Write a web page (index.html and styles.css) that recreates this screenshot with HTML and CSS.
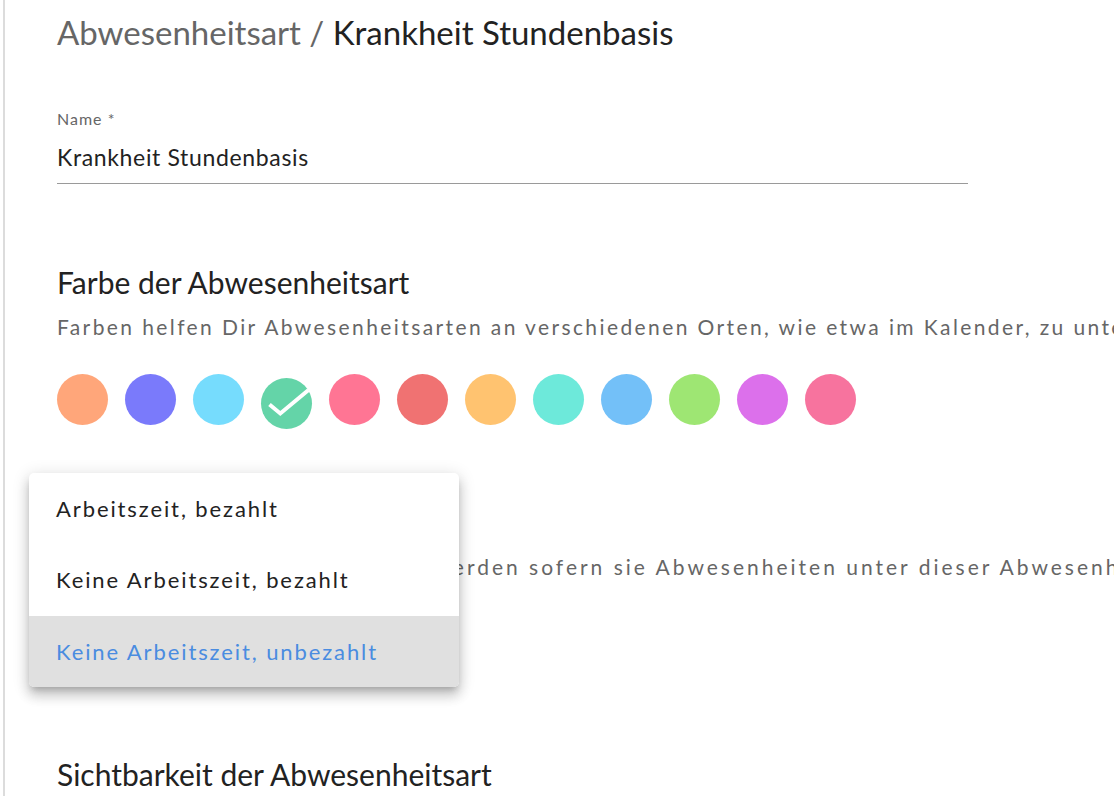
FILE: index.html
```html
<!DOCTYPE html>
<html lang="de">
<head>
<meta charset="utf-8">
<title>Abwesenheitsart</title>
<link rel="stylesheet" href="styles.css">
</head>
<body>
<div class="page">
  <h1 class="title"><span class="crumb">Abwesenheitsart /</span> Krankheit Stundenbasis</h1>

  <div class="field">
    <label class="field-label">Name *</label>
    <div class="field-input">Krankheit Stundenbasis</div>
  </div>

  <section class="section color-section">
    <h2 class="section-title">Farbe der Abwesenheitsart</h2>
    <p class="section-desc">Farben helfen Dir Abwesenheitsarten an verschiedenen Orten, wie etwa im Kalender, zu unterscheiden.</p>
    <div class="swatches">
      <span class="swatch" style="background:#ffa67a"></span>
      <span class="swatch" style="background:#7a7afb"></span>
      <span class="swatch" style="background:#76dcfd"></span>
      <span class="swatch selected" style="background:#64d4a8">
        <svg viewBox="0 0 51 51" width="51" height="51"><path d="M8.5 26.5 L19.3 35.5 L47.5 12" fill="none" stroke="#fff" stroke-width="4"/></svg>
      </span>
      <span class="swatch" style="background:#ff7594"></span>
      <span class="swatch" style="background:#f07272"></span>
      <span class="swatch" style="background:#ffc370"></span>
      <span class="swatch" style="background:#6de9da"></span>
      <span class="swatch" style="background:#73c0f8"></span>
      <span class="swatch" style="background:#9ee673"></span>
      <span class="swatch" style="background:#dc70eb"></span>
      <span class="swatch" style="background:#f7739e"></span>
    </div>
  </section>

  <section class="section work-section">
    <h2 class="section-title">Arbeitszeit</h2>
    <p class="section-desc work-desc">Lege fest, wie Stunden gezählt werden sofern sie Abwesenheiten unter dieser Abwesenheitsart eintragen.</p>
    <div class="select-space"></div>

    <ul class="menu">
      <li class="menu-item">Arbeitszeit, bezahlt</li>
      <li class="menu-item">Keine Arbeitszeit, bezahlt</li>
      <li class="menu-item active">Keine Arbeitszeit, unbezahlt</li>
    </ul>
  </section>

  <section class="section visibility-section">
    <h2 class="section-title">Sichtbarkeit der Abwesenheitsart</h2>
  </section>
</div>
</body>
</html>
```

FILE: styles.css
```css
html, body {
  margin: 0;
  padding: 0;
  background: #fff;
  overflow: hidden;
}
body {
  font-family: "Lato", "Noto Sans", sans-serif;
  color: #222;
  width: 1114px;
  height: 796px;
}
.page {
  margin-left: 3px;
  border-left: 2px solid #dcdcdc;
  padding-left: 52px;
  height: 796px;
  box-sizing: border-box;
  position: relative;
  overflow: hidden;
}
.title {
  margin: 0;
  padding-top: 12px;
  font-size: 33px;
  font-weight: 400;
  line-height: 40px;
  color: #222;
  white-space: nowrap;
}
.crumb { color: #666; }

.field {
  margin-top: 57px;
  width: 911px;
}
.field-label {
  display: block;
  font-size: 16px;
  line-height: 20px;
  letter-spacing: 1px;
  color: #666;
}
.field-input {
  font-size: 23px;
  line-height: 30px;
  letter-spacing: 0.65px;
  padding: 13px 0 11px;
  border-bottom: 1px solid #9a9a9a;
  color: #222;
}

.section-title {
  margin: 0;
  font-size: 30px;
  font-weight: 400;
  line-height: 36px;
  color: #222;
  white-space: nowrap;
}
.section-desc {
  margin: 13px 0 0;
  font-size: 21px;
  line-height: 28px;
  letter-spacing: 2.4px;
  color: #666;
  white-space: nowrap;
}
.work-desc { letter-spacing: 3px; }
.color-section { margin-top: 80px; }
.swatches {
  display: flex;
  align-items: flex-start;
  gap: 17px;
  margin-top: 33px;
}
.swatch {
  width: 51px;
  height: 51px;
  border-radius: 50%;
  flex: none;
  display: block;
}
.swatch.selected { margin-top: 4px; }
.swatch svg { display: block; }

.work-section {
  margin-top: 75px;
  position: relative;
}
.select-space { height: 95px; }

.menu {
  position: absolute;
  left: -28px;
  top: -31px;
  width: 430px;
  margin: 0;
  padding: 0;
  list-style: none;
  background: #fff;
  border-radius: 5px;
  box-shadow: 0 5px 6px -3px rgba(0,0,0,0.2), 0 9px 12px 1px rgba(0,0,0,0.14), 0 3px 16px 2px rgba(0,0,0,0.12);
  overflow: hidden;
}
.menu-item {
  height: 71.3px;
  display: flex;
  align-items: center;
  padding-left: 27px;
  font-size: 22px;
  letter-spacing: 1.9px;
  color: #222;
}
.menu-item.active {
  background: #e0e0e0;
  color: #4a8ce0;
}

.visibility-section { margin-top: 80px; }
```
